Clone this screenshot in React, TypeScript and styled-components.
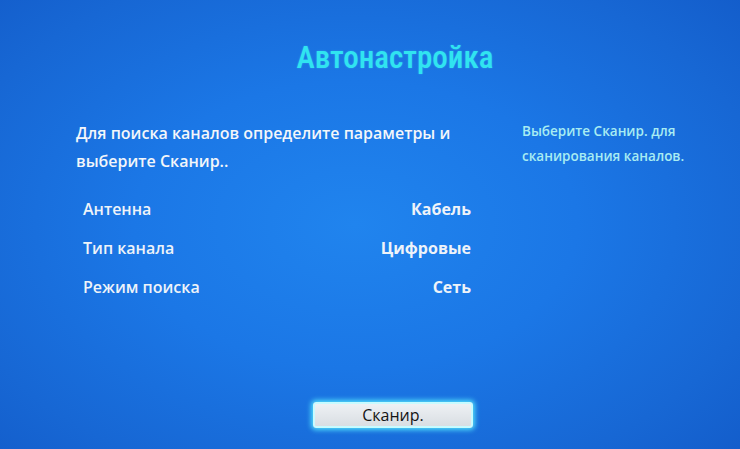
import React from "react";
import styled, { createGlobalStyle } from "styled-components";

const GlobalStyle = createGlobalStyle`
  html, body { margin: 0; padding: 0; height: 100%; }
  body { font-family: "Open Sans", "Noto Sans", sans-serif; }
  #root { height: 100%; }
`;

const Screen = styled.div`
  box-sizing: border-box;
  width: 100%;
  height: 100vh;
  overflow: hidden;
  display: flex;
  flex-direction: column;
  padding: 40px 26px 21px 76px;
  background:
    radial-gradient(ellipse 75% 80% at 48% 50%, #2084ee 0%, #1b77e6 40%, #1767d4 75%, #125ac8 100%);
`;

const Title = styled.h1`
  margin: 0;
  text-align: center;
  font-family: Roboto, "Noto Sans", sans-serif;
  font-stretch: condensed;
  font-size: 31px;
  line-height: 36px;
  font-weight: 500;
  color: #30e4f0;
  text-shadow: 0 0 2px rgba(80, 240, 255, 0.35);
`;

const Content = styled.div`
  display: grid;
  grid-template-columns: 395px 1fr;
  column-gap: 51px;
  margin-top: 43px;
`;

const Left = styled.div`
  display: flex;
  flex-direction: column;
`;

const Description = styled.p`
  margin: 0;
  font-size: 16px;
  line-height: 28px;
  font-weight: 600;
  white-space: nowrap;
  color: #f3f6fa;
`;

const Options = styled.div`
  display: flex;
  flex-direction: column;
  margin-top: 14px;
`;

const OptionRow = styled.div`
  display: flex;
  justify-content: space-between;
  align-items: center;
  height: 39px;
  padding-left: 7px;
  font-size: 16px;
  font-weight: 600;
  color: #eef3f9;
`;

const OptionValue = styled.span`
  font-weight: 700;
`;

const Help = styled.p`
  margin: 0;
  font-size: 13.5px;
  line-height: 25px;
  font-weight: 600;
  white-space: nowrap;
  color: #a8ecf2;
`;

const Footer = styled.div`
  margin-top: auto;
  display: flex;
  justify-content: center;
  padding-right: 4px;
`;

const ScanButton = styled.button`
  box-sizing: border-box;
  width: 160px;
  height: 26px;
  padding: 0;
  border: 2px solid #c8fbff;
  border-radius: 3px;
  background: linear-gradient(#eef1f4, #d9dee3);
  box-shadow: 0 0 5px 2px rgba(90, 240, 255, 0.85);
  font-family: "Open Sans", "Noto Sans", sans-serif;
  font-size: 16px;
  font-weight: 500;
  line-height: 22px;
  color: #141414;
`;

const options = [
  { label: "Антенна", value: "Кабель" },
  { label: "Тип канала", value: "Цифровые" },
  { label: "Режим поиска", value: "Сеть" },
];

export default function App() {
  return (
    <>
      <GlobalStyle />
      <Screen>
        <Title>Автонастройка</Title>
        <Content>
          <Left>
            <Description>
              Для поиска каналов определите параметры и
              <br />
              выберите Сканир..
            </Description>
            <Options>
              {options.map((o) => (
                <OptionRow key={o.label}>
                  <span>{o.label}</span>
                  <OptionValue>{o.value}</OptionValue>
                </OptionRow>
              ))}
            </Options>
          </Left>
          <Help>
            Выберите Сканир. для
            <br />
            сканирования каналов.
          </Help>
        </Content>
        <Footer>
          <ScanButton>Сканир.</ScanButton>
        </Footer>
      </Screen>
    </>
  );
}
